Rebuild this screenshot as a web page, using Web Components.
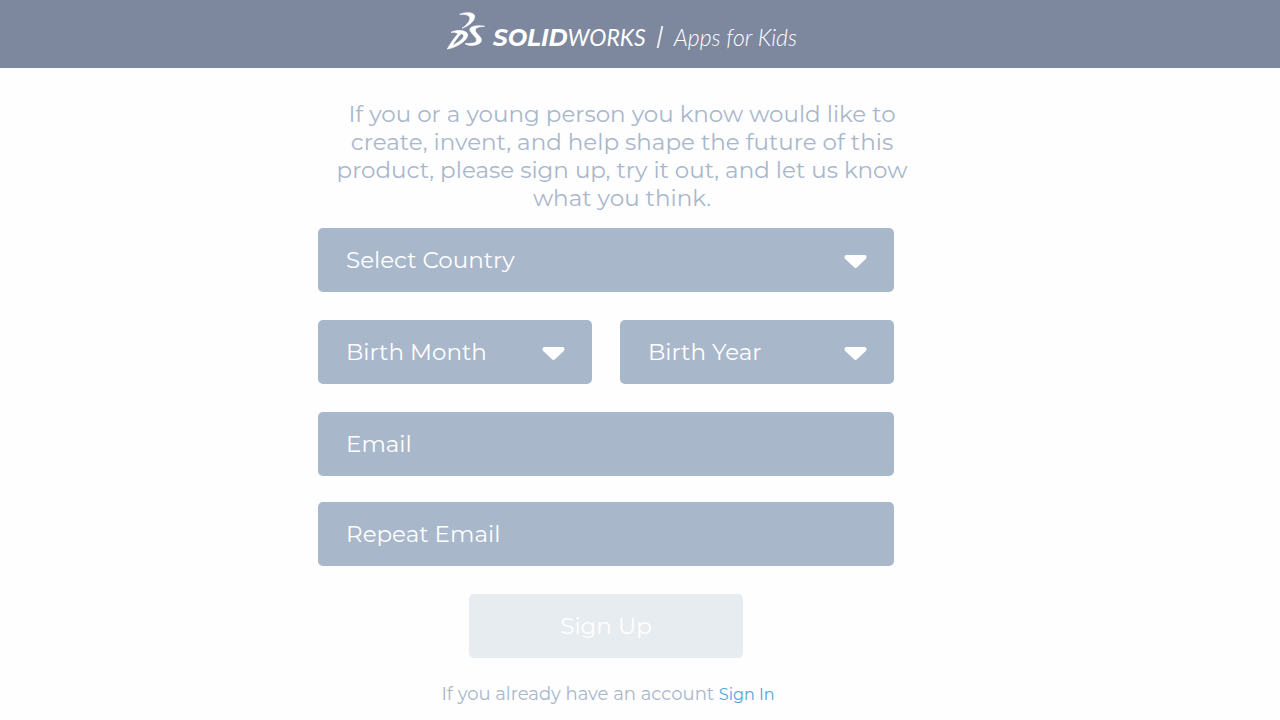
<!DOCTYPE html>
<html lang="en">
<head>
<meta charset="utf-8">
<meta name="viewport" content="width=device-width, initial-scale=1">
<title>SOLIDWORKS Apps for Kids</title>
<style>
  body { margin: 0; background: #fefefe; font-family: Montserrat, Inter, sans-serif; font-size: 23px; color: #a9b7cb; --field: #a9b7cb; --bar: #7d879e; }
</style>
</head>
<body>
<signup-page></signup-page>
<script>
const define = (name, html, setup) => customElements.define(name, class extends HTMLElement {
  constructor() {
    super();
    this.attachShadow({ mode: 'open' }).innerHTML = html;
  }
  connectedCallback() { if (setup) setup(this, this.shadowRoot); }
});

define('brand-logo', `
  <style>
    :host { display: flex; align-items: center; color: #fff; font-style: italic; font-size: 23px; line-height: 24px; white-space: nowrap; }
    svg { width: 38px; height: 38px; margin-right: 8px; display: block; }
    .name { display: flex; align-items: baseline; margin-top: 12px; }
    b { font-family: Montserrat, Inter, sans-serif; font-weight: 700; }
    .works { font-family: Lato, sans-serif; font-weight: 400; }
    i { width: 2px; height: 22px; margin: 11px 13px 0 13px; background: #fff; opacity: .85; transform: skewX(-12deg); }
    .product { margin-top: 12px; font-family: Lato, sans-serif; font-weight: 300; }
  </style>
  <svg viewBox="24 36 114 114" fill="#fff" stroke="#fff" stroke-width="2" stroke-linejoin="round" aria-hidden="true">
    <path d="M62 43C78 36 105 35 107 48C108 62 92 76 69 85C84 74 95 62 92 52C89 44 78 43 62 43Z"/>
    <path fill-rule="evenodd" d="M36 97C54 88 83 90 86 103C88 121 52 143 25 147C34 131 44 116 57 101C50 97 44 96 36 97ZM66 101C56 112 47 124 40 136C55 130 74 116 74 107C73 103 70 101 66 101Z"/>
    <path d="M137 79C123 75 101 77 94 84C89 92 98 99 106 108C117 119 113 127 103 129C94 131 84 130 78 131C88 138 111 139 124 128C134 117 119 107 111 97C104 86 114 80 137 79Z"/>
  </svg>
  <span class="name"><b>SOLID</b><span class="works">WORKS</span></span>
  <i></i>
  <span class="product">Apps for Kids</span>`);

define('top-bar', `
  <style>
    :host { display: flex; justify-content: center; box-sizing: border-box; min-height: 68px; padding: 12px 36px 18px 0; background: var(--bar); }
  </style>
  <slot></slot>`);

define('select-field', `
  <style>
    :host { display: block; position: relative; }
    select { display: block; box-sizing: border-box; width: 100%; height: 64px; padding: 0 64px 0 28px; border: 0; border-radius: 5px; background: var(--field); color: #fff; font: inherit; appearance: none; }
    svg { position: absolute; right: 27px; top: 27px; width: 23px; height: 14px; pointer-events: none; }
  </style>
  <select><option></option></select>
  <svg viewBox="0 0 23 14" fill="#fff" aria-hidden="true"><path d="M2.500 0H20.500Q22.500 0 22.500 2Q22.500 3.200 21.500 4.200L13 12.300Q11.500 13.700 10 12.300L1.500 4.200Q.5 3.200 .5 2Q.5 0 2.500 0Z"/></svg>`,
  (host, root) => {
    const label = host.getAttribute('label');
    root.querySelector('option').textContent = label;
    root.querySelector('select').setAttribute('aria-label', label);
  });

define('text-field', `
  <style>
    :host { display: block; }
    input { display: block; box-sizing: border-box; width: 100%; height: 64px; padding: 0 28px; border: 0; border-radius: 5px; background: var(--field); color: #fff; font: inherit; }
    input::placeholder { color: #fff; opacity: 1; }
  </style>
  <input type="email">`,
  (host, root) => {
    const input = root.querySelector('input');
    input.placeholder = host.getAttribute('label');
    input.setAttribute('aria-label', input.placeholder);
  });

define('submit-button', `
  <style>
    :host { display: block; width: 274px; max-width: 100%; }
    button { display: block; width: 100%; height: 64px; padding: 0; border: 0; border-radius: 5px; background: #e7ecf0; color: #fff; font: inherit; }
  </style>
  <button type="submit"><slot></slot></button>`);

define('signup-page', `
  <style>
    :host { display: block; }
    main { box-sizing: border-box; max-width: 644px; margin: 0 auto; padding: 32px 0 12px; }
    .intro { max-width: 608px; margin: 0 0 16px; text-align: center; line-height: 28px; }
    form { display: flex; flex-direction: column; gap: 28px; max-width: 576px; }
    .birth { display: grid; grid-template-columns: 1fr 1fr; gap: 28px; }
    .emails { display: grid; gap: 26px; }
    submit-button { align-self: center; }
    .account { max-width: 580px; margin: 24px 0 0; text-align: center; font-size: 18px; line-height: 24px; }
    a { font-size: 16px; color: #50a5dc; text-decoration: none; }
  </style>
  <top-bar><brand-logo></brand-logo></top-bar>
  <main>
    <p class="intro">If you or a young person you know would like to<br>create, invent, and help shape the future of this<br>product, please sign up, try it out, and let us know<br>what you think.</p>
    <form>
      <select-field label="Select Country"></select-field>
      <div class="birth">
        <select-field label="Birth Month"></select-field>
        <select-field label="Birth Year"></select-field>
      </div>
      <div class="emails">
        <text-field label="Email"></text-field>
        <text-field label="Repeat Email"></text-field>
      </div>
      <submit-button>Sign Up</submit-button>
    </form>
    <p class="account">If you already have an account <a href="#sign-in">Sign In</a></p>
  </main>`);
</script>
</body>
</html>
